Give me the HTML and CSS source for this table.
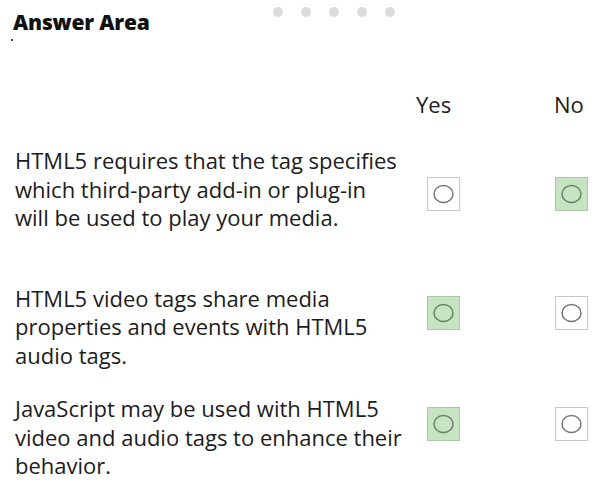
FILE: index.html
```html
<!DOCTYPE html>
<html>
<head>
<meta charset="utf-8">
<link rel="stylesheet" href="styles.css">
</head>
<body>
<div class="page">
  <div class="top">
    <h1 class="title">Answer Area</h1>
    <div class="pager">
      <span class="pdot"></span><span class="pdot"></span><span class="pdot"></span><span class="pdot"></span><span class="pdot"></span>
    </div>
  </div>
  <div class="speck"></div>
  <div class="grid">
    <div class="hd-text"></div>
    <div class="hd hd-yes">Yes</div>
    <div class="hd hd-no">No</div>

    <div class="stmt r1">HTML5 requires that the tag specifies<br>which third-party add-in or plug-in<br>will be used to play your media.</div>
    <div class="cell r1c"><span class="box"><svg viewBox="0 0 31 32"><ellipse cx="15.5" cy="16" rx="9.5" ry="8.5"/></svg></span></div>
    <div class="cell r1c"><span class="box sel"><svg viewBox="0 0 31 32"><ellipse cx="15.5" cy="16" rx="9.5" ry="8.5"/></svg></span></div>

    <div class="stmt r2">HTML5 video tags share media<br>properties and events with HTML5<br>audio tags.</div>
    <div class="cell r2c"><span class="box sel"><svg viewBox="0 0 31 32"><ellipse cx="15.5" cy="16" rx="9.5" ry="8.5"/></svg></span></div>
    <div class="cell r2c"><span class="box"><svg viewBox="0 0 31 32"><ellipse cx="15.5" cy="16" rx="9.5" ry="8.5"/></svg></span></div>

    <div class="stmt r3">JavaScript may be used with HTML5<br>video and audio tags to enhance their<br>behavior.</div>
    <div class="cell r3c"><span class="box sel"><svg viewBox="0 0 31 32"><ellipse cx="15.5" cy="16" rx="9.5" ry="8.5"/></svg></span></div>
    <div class="cell r3c"><span class="box"><svg viewBox="0 0 31 32"><ellipse cx="15.5" cy="16" rx="9.5" ry="8.5"/></svg></span></div>
  </div>
</div>
</body>
</html>
```
FILE: styles.css
```css
html, body {
  margin: 0;
  padding: 0;
  background: #ffffff;
}
body {
  font-family: "Open Sans", "Noto Sans", sans-serif;
  color: #1c1c1c;
}
.page {
  width: 603px;
  height: 501px;
  overflow: hidden;
}
.top {
  display: flex;
  align-items: flex-start;
  padding: 0 0 0 13px;
}
.title {
  margin: 8px 0 0 0;
  font-size: 21px;
  line-height: 28px;
  font-weight: 800;
  letter-spacing: -0.2px;
  color: #111;
  white-space: nowrap;
}
.pager {
  display: flex;
  gap: 18px;
  margin: 7px 0 0 123px;
}
.pdot {
  width: 10px;
  height: 10px;
  border-radius: 50%;
  background: #dcdcdc;
}
.speck {
  width: 2px;
  height: 2px;
  background: #444;
  margin: 3px 0 0 11px;
}
.grid {
  display: grid;
  grid-template-columns: 396px 128px 64px;
  padding-left: 15px;
  margin-top: 49px;
}
.hd {
  font-size: 22px;
  line-height: 28px;
}
.hd-yes { padding-left: 5px; }
.hd-no { padding-left: 15px; }
.stmt {
  font-size: 22px;
  line-height: 28.5px;
  letter-spacing: 0;
  white-space: nowrap;
}
.cell {
  padding-left: 16px;
}
.r1, .r1c { margin-top: 28px; }
.r1c { align-self: start; padding-top: 31px; }
.r2, .r2c { margin-top: 52px; }
.r2c { align-self: start; padding-top: 12px; }
.r3, .r3c { margin-top: 25px; }
.r3c { align-self: start; padding-top: 13px; }
.box {
  display: block;
  width: 33px;
  height: 34px;
  box-sizing: border-box;
  border: 1px solid #c9c9c9;
  background: #fff;
}
.box.sel {
  background: #c6e4c2;
  border-color: #a9c9a4;
}
.box svg {
  display: block;
  width: 31px;
  height: 32px;
}
.box ellipse {
  fill: none;
  stroke: #777;
  stroke-width: 1.5;
}
.box.sel ellipse {
  stroke: #6b7f68;
}
```
